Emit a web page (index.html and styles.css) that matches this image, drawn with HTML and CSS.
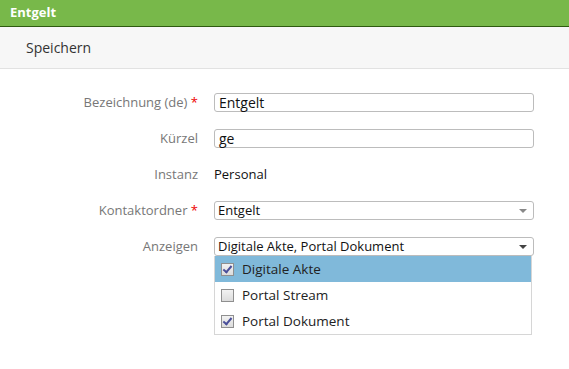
FILE: index.html
```html
<!DOCTYPE html>
<html lang="de">
<head>
  <meta charset="UTF-8" />
  <title>Entgelt</title>
  <link rel="stylesheet" href="styles.css">
</head>
<body>

<header class="kopf">Entgelt</header>

<div class="werkzeug">
  <span class="knopf">Speichern</span>
</div>

<div class="formular">
  <label class="etikett">Bezeichnung (de) <span class="pflicht">*</span></label>
  <div class="feld"><div class="eingabe text">Entgelt</div></div>

  <label class="etikett">Kürzel</label>
  <div class="feld"><div class="eingabe text">ge</div></div>

  <label class="etikett">Instanz</label>
  <div class="feld"><span class="wert">Personal</span></div>

  <label class="etikett">Kontaktordner <span class="pflicht">*</span></label>
  <div class="feld"><div class="eingabe auswahl">Entgelt<span class="pfeil"></span></div></div>

  <label class="etikett">Anzeigen</label>
  <div class="feld">
    <div class="eingabe auswahl">Digitale Akte, Portal Dokument<span class="pfeil dunkel"></span></div>
    <ul class="liste">
      <li class="aktiv"><span class="box an"></span>Digitale Akte</li>
      <li><span class="box"></span>Portal Stream</li>
      <li><span class="box an"></span>Portal Dokument</li>
    </ul>
  </div>
</div>

</body>
</html>
```

FILE: styles.css
```css
body {
  margin: 0;
  padding: 0;
  font-family: "Open Sans", Arial, sans-serif;
  font-size: 13px;
  color: #222;
  background: #fff;
}
.kopf {
  height: 26px;
  line-height: 25px;
  background-color: #78b84a;
  border-bottom: 1px solid #2e5a10;
  color: #fff;
  font-weight: bold;
  padding-left: 10px;
}
.werkzeug {
  height: 41px;
  background-color: #f7f7f7;
  border-bottom: 1px solid #e2e2e2;
  display: flex;
  align-items: center;
  padding-left: 26px;
}
.knopf {
  color: #333;
  font-size: 14px;
}
.formular {
  display: grid;
  grid-template-columns: 198px 320px;
  column-gap: 16px;
  row-gap: 17px;
  align-items: start;
  padding-top: 24px;
  padding-bottom: 30px;
}
.etikett {
  text-align: right;
  color: #777;
  line-height: 19px;
}
.pflicht {
  color: #e00;
}
.feld {
  line-height: 19px;
  min-height: 19px;
}
.wert {
  color: #111;
  line-height: 19px;
}
.eingabe {
  box-sizing: border-box;
  height: 19px;
  border: 1px solid #bcbcbc;
  border-radius: 3px;
  padding-left: 3px;
  line-height: 17px;
  color: #111;
  background: #fff;
}
.eingabe.text {
  font-size: 14px;
  padding-left: 4px;
}
.auswahl {
  position: relative;
}
.pfeil {
  position: absolute;
  right: 6px;
  top: 7px;
  border-left: 4px solid transparent;
  border-right: 4px solid transparent;
  border-top: 4px solid #888;
}
.pfeil.dunkel {
  border-top-color: #444;
}
.liste {
  width: 318px;
  box-sizing: border-box;
  margin: 0;
  padding: 0;
  list-style: none;
  background: #fff;
  border: 1px solid #d6d6d6;
  border-top: none;
}
.liste li {
  height: 26px;
  display: flex;
  align-items: center;
  padding-left: 6px;
  color: #222;
  font-size: 13.5px;
}
.liste li.aktiv {
  background-color: #80b9da;
}
.box {
  width: 11px;
  height: 11px;
  border: 1px solid #8f8f8f;
  background: linear-gradient(#f2f2f2, #dcdcdc);
  margin-right: 8px;
  position: relative;
}
.box.an::after {
  content: "";
  position: absolute;
  left: 3px;
  top: 0px;
  width: 3px;
  height: 7px;
  border-right: 2px solid #4a4f9a;
  border-bottom: 2px solid #4a4f9a;
  transform: rotate(40deg);
}
```
